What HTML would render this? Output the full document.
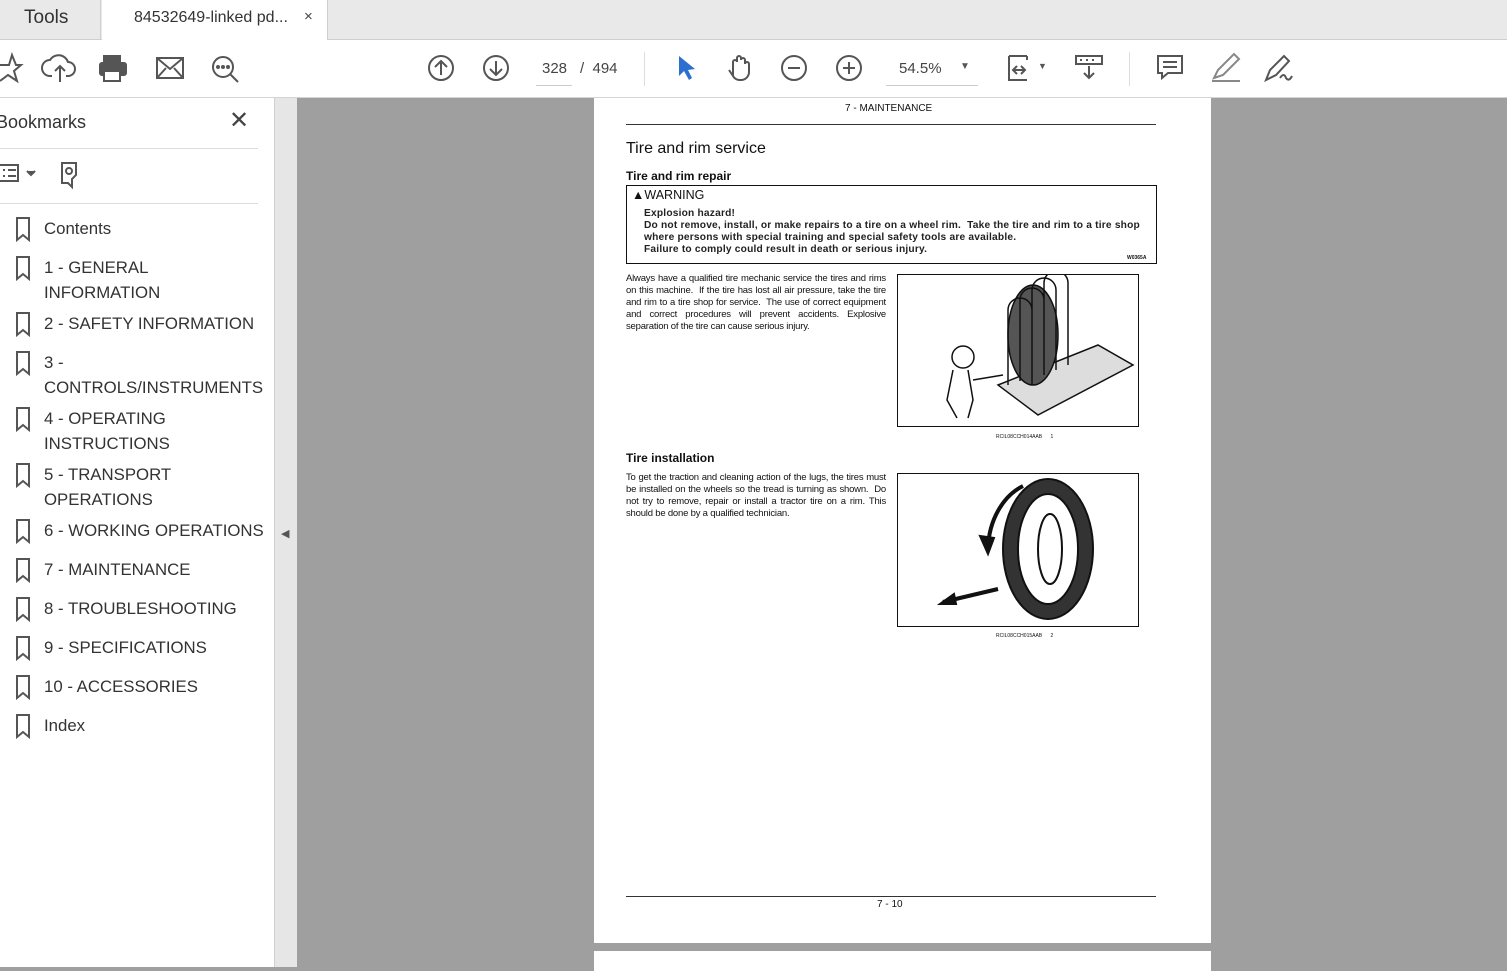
<!DOCTYPE html>
<html><head><meta charset="utf-8"><style>
*{margin:0;padding:0;box-sizing:border-box}
body{width:1507px;height:967px;overflow:hidden;position:relative;font-family:"Liberation Sans",sans-serif;background:#9f9f9f}
.abs{position:absolute}
#tabs{left:0;top:0;width:1507px;height:40px;background:#e9e9e9;border-bottom:1px solid #cfcfcf}
#tb{left:0;top:40px;width:1507px;height:58px;background:#fff;border-bottom:1px solid #d4d4d4}
#side{left:0;top:98px;width:275px;height:869px;background:#fff;border-right:1px solid #d0d0d0}
#strip{left:275px;top:98px;width:22px;height:869px;background:#e6e6e6}
.bm{position:absolute;left:44px;font-size:16.8px;color:#333;line-height:25px}
#page{left:594px;top:98px;width:617px;height:845px;background:#fff}
#page2{left:594px;top:951px;width:617px;height:20px;background:#fff}
.pt{position:absolute;font-size:9.3px;line-height:12px;color:#111}
svg.i{position:absolute}
</style></head><body>
<div id="tabs" class="abs">
 <div class="abs" style="left:0;top:0;width:101px;height:40px;border-right:1px solid #cfcfcf"></div>
 <div class="abs" style="left:24px;top:7px;font-size:19px;color:#333">Tools</div>
 <div class="abs" style="left:102px;top:0;width:226px;height:41px;background:#fff;border-right:1px solid #cfcfcf"></div>
 <div class="abs" style="left:134px;top:9px;font-size:16px;color:#333">84532649-linked pd...</div>
 <div class="abs" style="left:304px;top:8px;font-size:15px;color:#444">×</div>
</div>
<div id="tb" class="abs">
 <svg class="i" style="left:0;top:12px" width="300" height="34" viewBox="0 0 300 34" fill="none" stroke="#555" stroke-width="2">
  <path d="M-4 13 L9 13 L12 3 L16 13 L21 13 L14 19 L17 29 L8 23 L0 29"/>
  <path d="M52 24 H50 a8 8 0 0 1 0-16 a10 10 0 0 1 18 2 a6 6 0 0 1 0 14 H66 M60 30 V14 M55 19 l5-5 5 5"/>
  <rect x="104" y="4" width="16" height="7" fill="#555"/><rect x="100" y="11" width="26" height="12" rx="2" fill="#555"/><rect x="104" y="19" width="16" height="10" fill="#fff"/>
  <rect x="157" y="6" width="26" height="20"/><path d="M157 6 L170 17 L183 6 M157 26 L166 16 M183 26 L174 16"/>
  <circle cx="223" cy="15" r="10"/><path d="M230 22 L238 30"/><circle cx="218" cy="15" r="1" fill="#555"/><circle cx="223" cy="15" r="1" fill="#555"/><circle cx="228" cy="15" r="1" fill="#555"/>
 </svg>
 <svg class="i" style="left:425px;top:12px" width="880" height="34" viewBox="425 12 880 34" fill="none" stroke="#555" stroke-width="2">
  <circle cx="441" cy="28" r="12"/><path d="M441 35 V21 M435 27 l6-6 6 6"/>
  <circle cx="496" cy="28" r="12"/><path d="M496 21 V35 M490 29 l6 6 6-6"/>
  <path d="M679 16 L679 36 L684 31 L689 40 L692 38 L688 30 L695 29 Z" fill="#2c6fcf" stroke="none"/>
  <path d="M733 36 V22 a2 2 0 0 1 4 0 V18 a2 2 0 0 1 4 0 V20 a2 2 0 0 1 4 0 V24 a2 2 0 0 1 4 0 V32 a8 8 0 0 1-8 8 h-2 a8 8 0 0 1-6-4 l-4-6"/>
  <circle cx="794" cy="28" r="12"/><path d="M788 28 H800"/>
  <circle cx="849" cy="28" r="12"/><path d="M843 28 H855 M849 22 V34"/>
  <path d="M1009 16 H1027 M1009 16 V40 H1027 M1027 16 V20 M1013 30 H1025 M1017 26 l-4 4 4 4 M1021 26 l4 4-4 4"/>
  <path d="M1076 16 H1102 V24 H1076 Z M1089 26 V38 M1084 33 l5 5 5-5 M1080 20 h2 M1086 20 h2 M1092 20 h2"/>
  <path d="M1158 16 H1182 V33 H1168 L1162 38 V33 H1158 Z M1163 22 H1177 M1163 27 H1177"/>
  <path d="M1214 38 L1218 30 L1234 14 L1239 19 L1223 35 Z M1212 41 H1240" stroke="#888"/>
  <path d="M1266 40 L1270 30 L1284 16 L1289 21 L1276 35 Z M1280 38 q4-6 6 0 q3 4 6-2"/>
 </svg>
 <div class="abs" style="left:542px;top:20px;font-size:15px;color:#444">328</div>
 <div class="abs" style="left:536px;top:45px;width:36px;height:1px;background:#ccc"></div>
 <div class="abs" style="left:580px;top:20px;font-size:15px;color:#444">/&nbsp;&nbsp;494</div>
 <div class="abs" style="left:644px;top:12px;width:1px;height:34px;background:#ddd"></div>
 <div class="abs" style="left:899px;top:20px;font-size:15px;color:#444">54.5%</div>
 <div class="abs" style="left:886px;top:45px;width:92px;height:1px;background:#ccc"></div>
 <div class="abs" style="left:960px;top:21px;font-size:10px;color:#555">▼</div>
 <div class="abs" style="left:1038px;top:21px;font-size:9px;color:#555">▼</div>
 <div class="abs" style="left:1129px;top:12px;width:1px;height:34px;background:#ddd"></div>
</div>
<div id="side" class="abs">
 <div class="abs" style="left:-4px;top:14px;font-size:18px;color:#333">Bookmarks</div>
 <div class="abs" style="left:229px;top:8px;font-size:24px;color:#444">✕</div>
 <div class="abs" style="left:0;top:50px;width:258px;height:1px;background:#ddd"></div>
 <svg class="i" style="left:0;top:63px" width="100" height="30" fill="none" stroke="#555" stroke-width="2"><rect x="-2" y="4" width="20" height="16"/><path d="M3 9h2M8 9h8M3 15h2M8 15h8"/><path d="M27 10l4 4 4-4" fill="#555"/><path d="M62 2h14v12l-4 4v8l-4-4-6 0z"/><circle cx="69" cy="10" r="3"/></svg>
 <div class="abs" style="left:0;top:105px;width:258px;height:1px;background:#ddd"></div>
</div>
<div id="strip" class="abs"><div class="abs" style="left:6px;top:429px;font-size:11px;color:#555">◀</div></div>
<svg class="i" style="left:0;top:0" width="30" height="967" fill="none" stroke="#555" stroke-width="2">
 <defs><path id="f" d="M17 0h12v22l-6-5-6 5z"/></defs>
 <use href="#f" y="218"/><use href="#f" y="257"/><use href="#f" y="313"/><use href="#f" y="352"/><use href="#f" y="408"/><use href="#f" y="464"/><use href="#f" y="520"/><use href="#f" y="559"/><use href="#f" y="598"/><use href="#f" y="637"/><use href="#f" y="676"/><use href="#f" y="715"/>
</svg>
<div class="bm" style="top:216px">Contents</div>
<div class="bm" style="top:255px">1 - GENERAL<br>INFORMATION</div>
<div class="bm" style="top:311px">2 - SAFETY INFORMATION</div>
<div class="bm" style="top:350px">3 -<br>CONTROLS/INSTRUMENTS</div>
<div class="bm" style="top:406px">4 - OPERATING<br>INSTRUCTIONS</div>
<div class="bm" style="top:462px">5 - TRANSPORT<br>OPERATIONS</div>
<div class="bm" style="top:518px">6 - WORKING OPERATIONS</div>
<div class="bm" style="top:557px">7 - MAINTENANCE</div>
<div class="bm" style="top:596px">8 - TROUBLESHOOTING</div>
<div class="bm" style="top:635px">9 - SPECIFICATIONS</div>
<div class="bm" style="top:674px">10 - ACCESSORIES</div>
<div class="bm" style="top:713px">Index</div>

<div id="page" class="abs">
 <div class="pt" style="left:251px;top:5px;font-size:10px">7 - MAINTENANCE</div>
 <div class="abs" style="left:32px;top:26px;width:530px;height:1px;background:#333"></div>
 <div class="pt" style="left:32px;top:41px;font-size:16px;line-height:20px">Tire and rim service</div>
 <div class="pt" style="left:32px;top:72px;font-size:12px;font-weight:bold">Tire and rim repair</div>
 <div class="abs" style="left:32px;top:87px;width:531px;height:79px;border:1px solid #111"></div>
 <div class="pt" style="left:38px;top:90px;font-size:12.5px;line-height:15px">▲WARNING</div>
 <div class="pt" style="left:50px;top:110px;font-weight:bold;color:#222;font-size:10.2px;letter-spacing:0.2px">Explosion hazard!<br>Do not remove, install, or make repairs to a tire on a wheel rim.&nbsp; Take the tire and rim to a tire shop<br>where persons with special training and special safety tools are available.<br>Failure to comply could result in death or serious injury.</div>
 <div class="pt" style="left:533px;top:154px;font-size:5px;font-weight:bold">W0365A</div>
 <div class="pt" style="left:32px;top:175px;width:260px;font-size:9.5px;letter-spacing:-0.2px;text-align:justify">Always have a qualified tire mechanic service the tires and rims on this machine.&nbsp; If the tire has lost all air pressure, take the tire and rim to a tire shop for service.&nbsp; The use of correct equipment and correct procedures will prevent accidents. Explosive separation of the tire can cause serious injury.</div>
 <div class="abs" style="left:303px;top:176px;width:242px;height:153px;border:1px solid #111">
  <svg width="240" height="151" fill="none" stroke="#111" stroke-width="1.5">
   <path d="M100 110 L200 70 L235 90 L140 140 Z" fill="#ddd"/>
   <ellipse cx="135" cy="60" rx="25" ry="50" fill="#555"/>
   <path d="M110 110 V35 a12 12 0 0 1 24 0 V110 M122 106 V25 a12 12 0 0 1 24 0 V100 M134 102 V15 a12 12 0 0 1 24 0 V95 M146 98 V8 a12 12 0 0 1 24 0 V90"/>
   <circle cx="65" cy="82" r="11"/><path d="M55 95 l-6 30 l10 18 M70 95 l5 30 l-5 18 M75 105 l30 -5"/>
  </svg>
 </div>
 <div class="pt" style="left:402px;top:333px;font-size:5px">RCIL08CCH014AAB&nbsp;&nbsp;&nbsp;&nbsp;&nbsp;&nbsp;1</div>
 <div class="pt" style="left:32px;top:354px;font-size:12px;font-weight:bold">Tire installation</div>
 <div class="pt" style="left:32px;top:374px;width:260px;font-size:9.5px;letter-spacing:-0.2px;text-align:justify">To get the traction and cleaning action of the lugs, the tires must be installed on the wheels so the tread is turning as shown.&nbsp; Do not try to remove, repair or install a tractor tire on a rim. This should be done by a qualified technician.</div>
 <div class="abs" style="left:303px;top:375px;width:242px;height:154px;border:1px solid #111">
  <svg width="240" height="152" fill="none" stroke="#111" stroke-width="2">
   <ellipse cx="150" cy="75" rx="45" ry="70" fill="#333"/>
   <ellipse cx="150" cy="75" rx="30" ry="55" fill="#fff"/>
   <ellipse cx="152" cy="75" rx="12" ry="35" fill="#fff"/>
   <path d="M125 12 a55 70 0 0 0 -35 62" stroke-width="4"/><path d="M82 62 l8 18 6-16z" fill="#111"/>
   <path d="M45 128 L100 115" stroke-width="4"/><path d="M42 130 l14-10 2 10z" fill="#111"/>
  </svg>
 </div>
 <div class="pt" style="left:402px;top:532px;font-size:5px">RCIL08CCH015AAB&nbsp;&nbsp;&nbsp;&nbsp;&nbsp;&nbsp;2</div>
 <div class="abs" style="left:32px;top:798px;width:530px;height:1px;background:#333"></div>
 <div class="pt" style="left:283px;top:801px;font-size:10px">7 - 10</div>
</div>
<div id="page2" class="abs"></div>
</body></html>
